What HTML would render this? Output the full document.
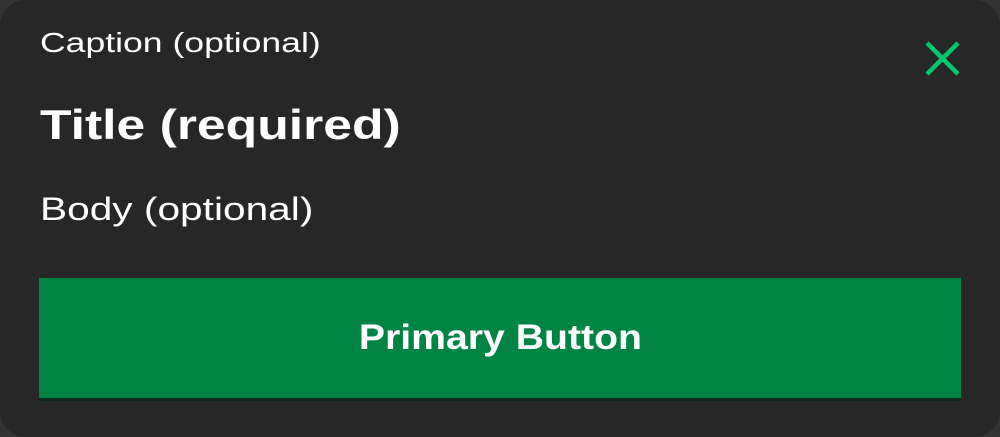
<!DOCTYPE html>
<html><head><style>
html,body{margin:0;padding:0;}
body{width:1000px;height:437px;background:#333;overflow:hidden;font-family:"Liberation Sans",sans-serif;color:#fff;position:relative}
.card{position:absolute;left:0;top:0;width:1000px;height:437px;background:#272727;border-radius:26px}
.t{position:absolute;left:40px;white-space:nowrap;transform:scaleX(1.27);transform-origin:0 0}
.btn{position:absolute;left:39px;top:278px;width:922px;height:120px;background:#008444;box-shadow:0 3px 0 #0b2a1b;display:flex;align-items:center;justify-content:center;font-weight:bold;font-size:35px}
.btn span{display:inline-block;transform:scaleX(1.12)}
</style></head><body>
<div class="card">
<div class="t" style="top:27px;font-size:28px">Caption (optional)</div>
<div class="t" style="top:101px;font-size:42px;font-weight:bold;transform:scaleX(1.23)">Title (required)</div>
<div class="t" style="top:191px;font-size:32px">Body (optional)</div>
<svg style="position:absolute;left:920px;top:38px" width="44" height="44" viewBox="0 0 44 44"><path d="M7 5L38 36M38 5L7 36" stroke="#00c76a" stroke-width="4.5" fill="none"/></svg>
<div class="btn"><span>Primary Button</span></div>
</div>
</body></html>
